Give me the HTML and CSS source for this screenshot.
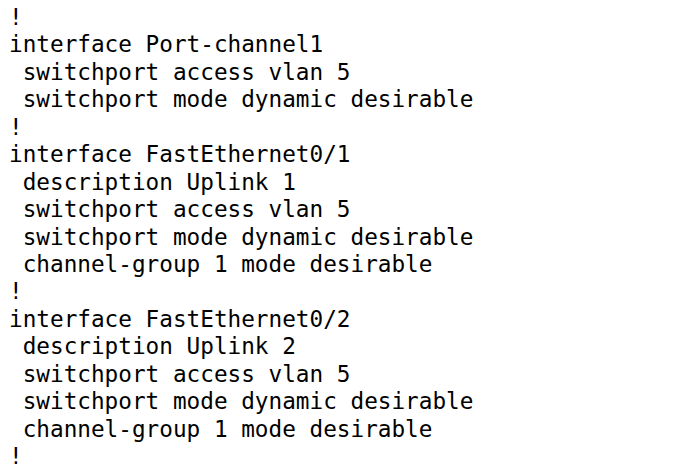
FILE: index.html
```html
<!DOCTYPE html>
<html>
<head>
<meta charset="utf-8">
<link rel="stylesheet" href="styles.css">
</head>
<body>
<pre class="config">!
interface Port-channel1
 switchport access vlan 5
 switchport mode dynamic desirable
!
interface FastEthernet0/1
 description Uplink 1
 switchport access vlan 5
 switchport mode dynamic desirable
 channel-group 1 mode desirable
!
interface FastEthernet0/2
 description Uplink 2
 switchport access vlan 5
 switchport mode dynamic desirable
 channel-group 1 mode desirable
!</pre>
</body>
</html>
```
FILE: styles.css
```css
html, body {
  margin: 0;
  background: #fff;
}
.config {
  margin: 0;
  padding: 4px 0 0 9px;
  font-family: "DejaVu Sans Mono", monospace;
  font-size: 22.7px;
  line-height: 27.44px;
  color: #000;
}
```
